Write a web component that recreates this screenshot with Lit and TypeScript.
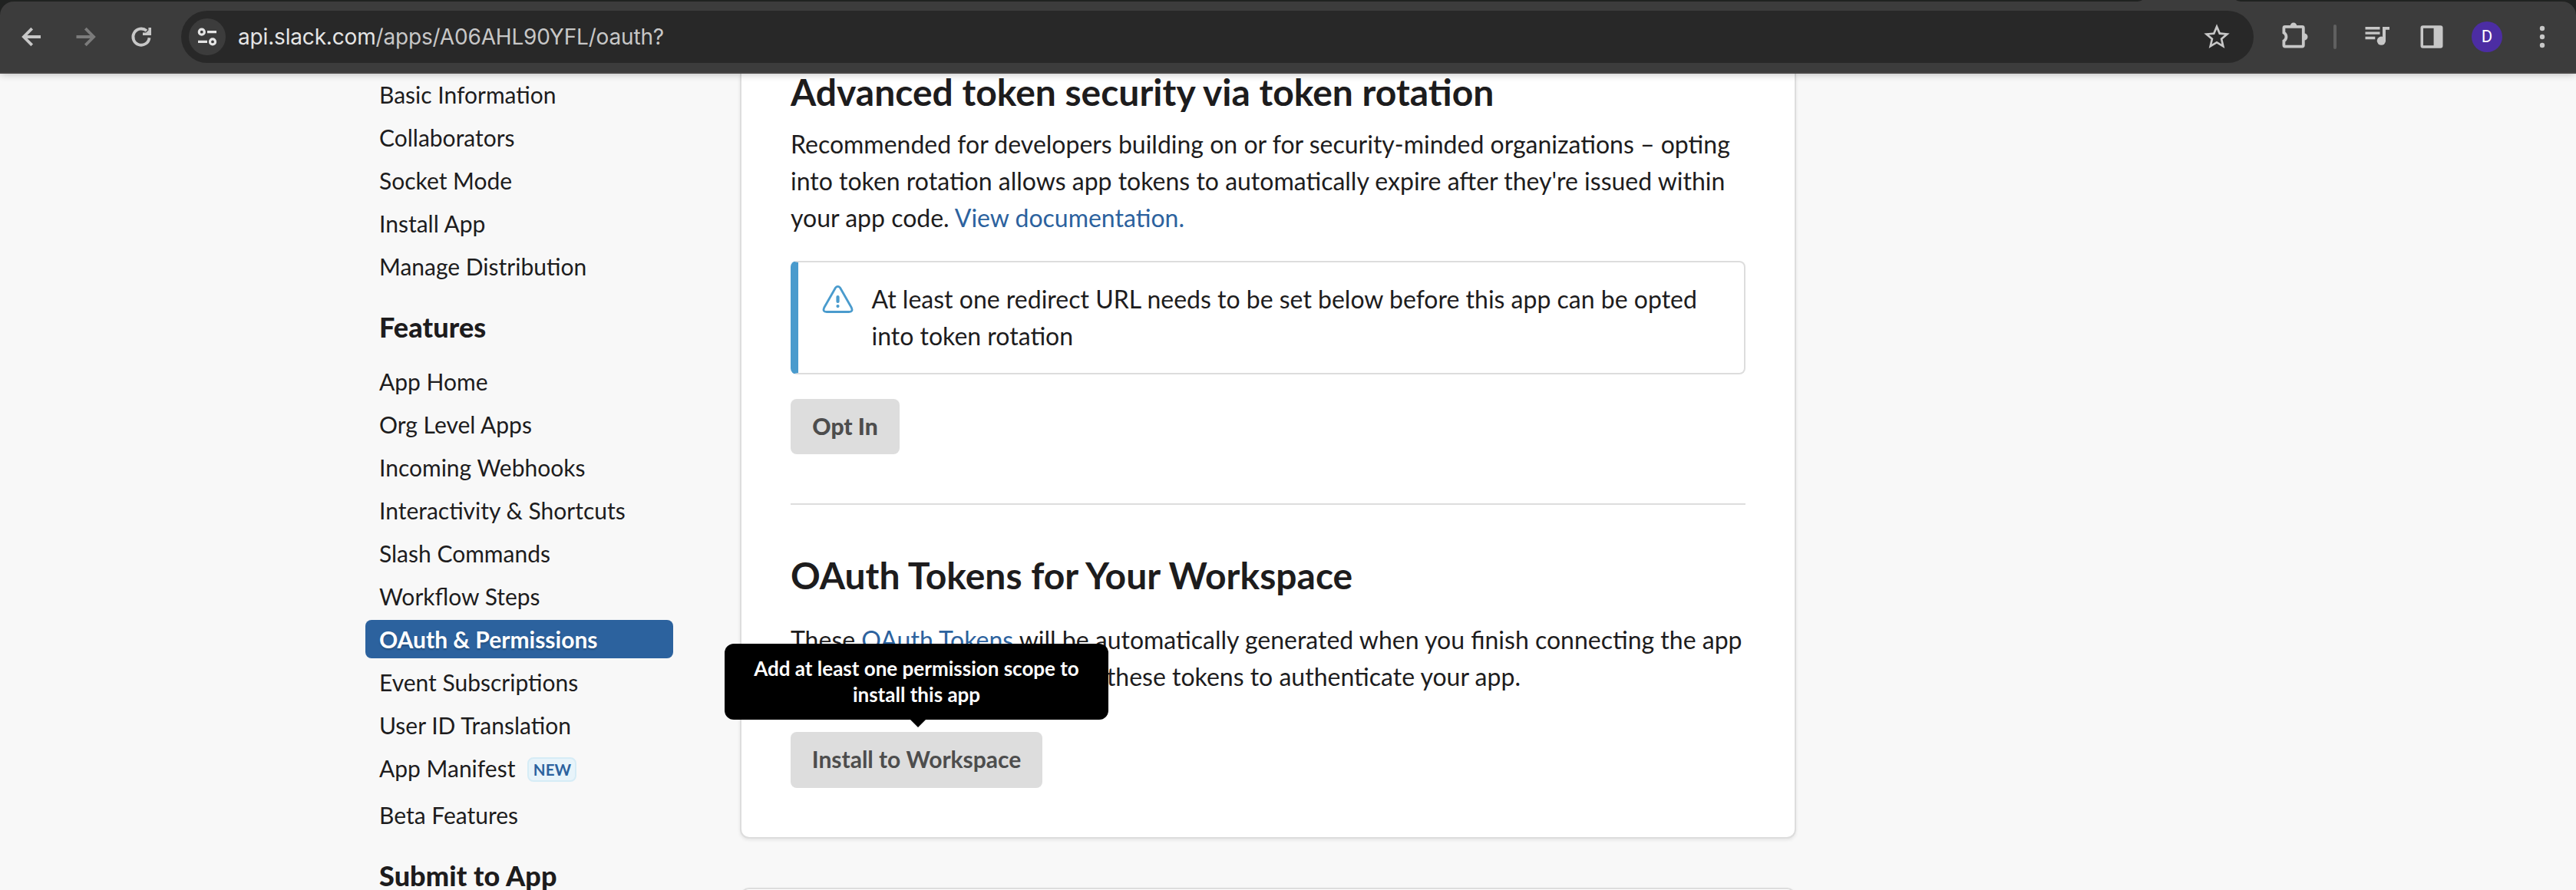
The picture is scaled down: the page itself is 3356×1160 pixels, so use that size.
import { LitElement, html, css, svg, nothing } from "lit";
import { customElement } from "lit/decorators.js";
import { classMap } from "lit/directives/class-map.js";

interface NavItem {
  label: string;
  active?: boolean;
  badge?: string;
}

interface NavSection {
  title?: string;
  items: NavItem[];
}

const SECTIONS: NavSection[] = [
  {
    items: [
      { label: "Basic Information" },
      { label: "Collaborators" },
      { label: "Socket Mode" },
      { label: "Install App" },
      { label: "Manage Distribution" },
    ],
  },
  {
    title: "Features",
    items: [
      { label: "App Home" },
      { label: "Org Level Apps" },
      { label: "Incoming Webhooks" },
      { label: "Interactivity & Shortcuts" },
      { label: "Slash Commands" },
      { label: "Workflow Steps" },
      { label: "OAuth & Permissions", active: true },
      { label: "Event Subscriptions" },
      { label: "User ID Translation" },
      { label: "App Manifest", badge: "NEW" },
      { label: "Beta Features" },
    ],
  },
  { title: "Submit to App", items: [] },
];

@customElement("browser-toolbar")
export class BrowserToolbar extends LitElement {
  static styles = css`
    :host {
      display: block;
      height: 96px;
      background: #202221;
      position: relative;
      z-index: 2;
      box-shadow: 0 0 10px rgba(0, 0, 0, 0.28);
    }
    .tab-foot {
      position: absolute;
      left: 2782px;
      top: 0;
      width: 140px;
      height: 2px;
      display: block;
    }
    .bar {
      box-sizing: border-box;
      height: 96px;
      padding: 14px 22px 0 22px;
      display: flex;
      align-items: flex-start;
      background: #3c3c3c;
      border-bottom: 2px solid #474545;
      clip-path: inset(2px 0 0 0 round 18px 18px 0 0);
    }
    .nav {
      display: flex;
      flex: none;
      gap: 36px;
      padding-top: 16px;
      margin-right: 34px;
    }
    svg {
      display: block;
      flex: none;
    }
    .address {
      box-sizing: border-box;
      flex: none;
      width: 2700px;
      height: 68px;
      border-radius: 34px;
      background: #282828;
      display: flex;
      align-items: center;
      padding: 0 28px 0 10px;
    }
    .site {
      width: 48px;
      height: 48px;
      border-radius: 50%;
      background: #3c3c3c;
    }
    .url {
      flex: 1;
      margin-left: 16px;
      font: 400 28px/40px Inter, "Liberation Sans", sans-serif;
      letter-spacing: -0.17px;
      color: #c7c7c7;
      white-space: nowrap;
    }
    .host {
      color: #e5e5e5;
    }
    .actions {
      display: flex;
      flex: none;
      align-items: center;
      gap: 32px;
      height: 68px;
      margin-left: 32px;
    }
    .divider {
      width: 4px;
      height: 32px;
      border-radius: 2px;
      background: #606060;
    }
    .avatar {
      width: 40px;
      height: 40px;
      border-radius: 50%;
      background: #4c2da3;
      color: #fff;
      font: 400 22px/40px Roboto, sans-serif;
      text-align: center;
    }
  `;

  render() {
    return html`
      <div class="bar">
        <div class="nav">
          <svg width="36" height="36" fill="none" stroke="#c7c7c7" stroke-width="3.8">
            <path d="M19.7 7.2L8.9 18l10.8 10.8M9 18h22" />
          </svg>
          <svg width="36" height="36" fill="none" stroke="#7b7b7b" stroke-width="3.8">
            <path d="M17.3 7.2L28.1 18L17.3 28.8M28 18H5.5" />
          </svg>
          <svg width="36" height="36" fill="none" stroke="#c7c7c7" stroke-width="3.8">
            <path d="M28.5 19.2A10.6 10.6 0 1 1 25 10.2" />
            <path d="M31 6v10H20v-3.4h4.2l3.2-3.2V6z" fill="#c7c7c7" stroke="none" />
          </svg>
        </div>
        <div class="address">
          <div class="site">
            <svg width="48" height="48" fill="none" stroke="#e5e5e5" stroke-width="3.2">
              <circle cx="16.8" cy="17.7" r="3.5" />
              <path d="M24 17.7h12M12 30.4h12" />
              <circle cx="31" cy="30.4" r="3.5" />
            </svg>
          </div>
          <div class="url"><span class="host">api.slack.com</span>/apps/A06AHL90YFL/oauth?</div>
          <svg width="40" height="40" viewBox="0 0 24 24" fill="#c7c7c7">
            <path
              d="M22 9.24l-7.19-.62L12 2 9.19 8.63 2 9.24l5.46 4.73L5.82 21 12 17.27 18.18 21l-1.63-7.03L22 9.24zM12 15.4l-3.76 2.27 1-4.28-3.32-2.88 4.38-.38L12 6.1l1.71 4.04 4.38.38-3.32 2.88 1 4.28L12 15.4z"
            />
          </svg>
        </div>
        <div class="actions">
          <svg width="40" height="40" fill="none" stroke="#c7c7c7" stroke-width="3.8">
            <path
              d="M7.4 14.6V8.4a1.5 1.5 0 0 1 1.5-1.5H31.3a1.5 1.5 0 0 1 1.5 1.5V31.1a1.5 1.5 0 0 1-1.5 1.5H8.9a1.5 1.5 0 0 1-1.5-1.5V25.400a6.300 6.300 0 0 0 0-10.800z"
              stroke="none"
            />
            <path
              d="M7.4 14.600V8.400a1.500 1.500 0 0 1 1.500-1.500H31.300a1.500 1.500 0 0 1 1.500 1.500V31.100a1.500 1.500 0 0 1-1.500 1.500H8.900a1.500 1.500 0 0 1-1.500-1.500V25.400a6.300 6.300 0 0 0 0-10.800z"
            />
            <path d="M15.700 5.800a4.300 4.300 0 0 1 8.600 0zM34 15.500a4.500 4.500 0 0 1 0 9z" fill="#c7c7c7" stroke="none" />
          </svg>
          <div class="divider"></div>
          <svg width="40" height="40" fill="#c7c7c7">
            <path d="M5.5 7h19v3.4h-19zM5.5 13.4h19v3.4h-19zM5.5 19.8h12.8v3.4H5.5z" />
            <path d="M28 7h9v3.8h-5v14.5h-4z" />
            <circle cx="26.4" cy="25.2" r="5.6" />
          </svg>
          <svg width="40" height="40" fill="#c7c7c7">
            <path
              fill-rule="evenodd"
              d="M8.5 5.2h23a3 3 0 0 1 3 3v23.6a3 3 0 0 1-3 3h-23a3 3 0 0 1-3-3V8.2a3 3 0 0 1 3-3zM9 8.8v22.4h13.6V8.8z"
            />
          </svg>
          <div class="avatar">D</div>
          <svg width="40" height="40" fill="#c7c7c7">
            <circle cx="20" cy="9" r="3.2" />
            <circle cx="20" cy="20" r="3.2" />
            <circle cx="20" cy="31" r="3.2" />
          </svg>
        </div>
      </div>
      <svg class="tab-foot" viewBox="0 0 140 2">
        <path d="M0 2Q6 2 9 0H131Q134 2 140 2z" fill="#3c3c3c" />
      </svg>
    `;
  }
}

@customElement("side-nav")
export class SideNav extends LitElement {
  static styles = css`
    :host {
      display: block;
      width: 401px;
      padding-top: 2px;
    }
    .list {
      display: flex;
      flex-direction: column;
      gap: 6px;
    }
    .item {
      display: flex;
      align-items: flex-start;
      height: 50px;
      padding: 0 18px;
      border-radius: 8px;
      font-size: 30px;
      line-height: 50px;
      white-space: nowrap;
    }
    .item.tall {
      height: 55px;
    }
    .item.active {
      background: #2c629e;
      color: #fff;
      font-weight: 700;
      text-shadow: 0 2px 2px rgba(0, 0, 0, 0.2);
    }
    .title {
      margin: 32px 0 24px;
      padding-left: 18px;
      font-size: 36px;
      line-height: 44px;
      font-weight: 900;
      letter-spacing: 0.1px;
    }
    .badge {
      box-sizing: border-box;
      width: 64px;
      height: 32px;
      margin: 11px 0 0 16px;
      border: 2px solid #d6ecf6;
      border-radius: 8px;
      background: #e8f4fa;
      color: #2c629e;
      font-size: 20.5px;
      line-height: 28px;
      font-weight: 700;
      text-align: center;
    }
  `;

  private renderItem(item: NavItem) {
    const classes = { item: true, active: !!item.active, tall: !!item.badge };
    return html`<div class=${classMap(classes)}>
      <span>${item.label}</span>${item.badge ? html`<span class="badge">${item.badge}</span>` : nothing}
    </div>`;
  }

  render() {
    return SECTIONS.map(
      (s) => html`
        ${s.title ? html`<div class="title">${s.title}</div>` : nothing}
        <div class="list">${s.items.map((i) => this.renderItem(i))}</div>
      `,
    );
  }
}

@customElement("oauth-panel")
export class OauthPanel extends LitElement {
  static styles = css`
    :host {
      display: block;
      width: 1376px;
    }
    .card {
      box-sizing: border-box;
      padding: 0 64px 64px;
      background: #fff;
      border: 2px solid #dddddd;
      border-top: 0;
      border-radius: 0 0 12px 12px;
      box-shadow: 0 2px 4px rgba(0, 0, 0, 0.08);
    }
    .card.next {
      margin-top: 64px;
      height: 80px;
      border-top: 2px solid #dddddd;
      border-radius: 12px;
    }
    h2 {
      margin: 0;
      font-size: 48px;
      font-weight: 700;
      white-space: nowrap;
    }
    .h-first {
      line-height: 47px;
    }
    .h-second {
      line-height: 57px;
      margin-top: 63px;
    }
    p {
      margin: 21px 0 0;
      font-size: 32px;
      line-height: 48px;
    }
    .p-second {
      margin-top: 32px;
    }
    .link {
      color: #2c629e;
    }
    .alert {
      display: flex;
      margin-top: 32px;
      padding: 24px 32px 24px 31px;
      border: 2px solid #dddddd;
      border-left: 10px solid #4a9bcd;
      border-radius: 8px;
      font-size: 32px;
      line-height: 48px;
    }
    .alert svg {
      flex: none;
      display: block;
      margin: 5px 23.5px 0 0;
    }
    .btn {
      position: relative;
      display: flex;
      align-items: center;
      justify-content: center;
      box-sizing: border-box;
      width: 142px;
      height: 72px;
      padding-bottom: 2px;
      border-radius: 8px;
      background: #dddddd;
      color: #4d4d4d;
      font-size: 30px;
      font-weight: 900;
      white-space: nowrap;
    }
    .row {
      display: flex;
      margin-top: 32px;
    }
    .row.install {
      margin-top: 48px;
    }
    .install .btn {
      width: 328px;
      height: 73px;
      padding-bottom: 3px;
      font-weight: 700;
    }
    .rule {
      height: 2px;
      margin-top: 64px;
      background: #dddddd;
    }
    .tip {
      position: absolute;
      left: 50%;
      bottom: 89px;
      transform: translateX(-50%);
      box-sizing: border-box;
      width: 500px;
      height: 99px;
      padding: 15px 24px 0;
      border-radius: 12px;
      background: #000;
      color: #fff;
      font-size: 26px;
      line-height: 34px;
      font-weight: 700;
      text-align: center;
      white-space: normal;
    }
    .tip::after {
      content: "";
      position: absolute;
      left: 242px;
      top: 99px;
      border: 10px solid transparent;
      border-top-color: #000;
      border-bottom: 0;
    }
  `;

  render() {
    return html`
      <div class="card">
        <h2 class="h-first">Advanced token security via token rotation</h2>
        <p>
          Recommended for developers building on or for security-minded organizations – opting into token rotation
          allows app tokens to automatically expire after they're issued within your app code.
          <span class="link">View documentation.</span>
        </p>
        <div class="alert">
          <svg width="41" height="40" fill="none" stroke="#4a9bcd" stroke-width="2.8" stroke-linejoin="round" stroke-linecap="round">
            ${svg`<path d="M17.4 4.2L2.8 29.8Q.2 35.5 6 35.5H35Q40.8 35.5 38.2 29.8L23.6 4.2Q20.5 .6 17.4 4.2z" />
            <path d="M20.5 16v6" stroke-width="4.2" /><path d="M20.5 28v.1" stroke-width="4.2" />`}
          </svg>
          <div>At least one redirect URL needs to be set below before this app can be opted into token rotation</div>
        </div>
        <div class="row"><div class="btn">Opt In</div></div>
        <div class="rule"></div>
        <h2 class="h-second">OAuth Tokens for Your Workspace</h2>
        <p class="p-second">
          These <span class="link">OAuth Tokens</span> will be automatically generated when you finish connecting the
          app to your workspace. You’ll use these tokens to authenticate your app.
        </p>
        <div class="row install">
          <div class="btn">
            Install to Workspace
            <div class="tip">Add at least one permission scope to install this app</div>
          </div>
        </div>
      </div>
      <div class="card next"></div>
    `;
  }
}

@customElement("app-root")
export class AppRoot extends LitElement {
  static styles = css`
    :host {
      display: block;
      height: 1160px;
      overflow: hidden;
      background: #f8f8f8;
      color: #1d1c1d;
      font-family: Lato, "Liberation Sans", sans-serif;
    }
    .page {
      display: flex;
      gap: 87px;
      padding-left: 476px;
    }
  `;

  render() {
    return html`
      <browser-toolbar></browser-toolbar>
      <div class="page">
        <side-nav></side-nav>
        <oauth-panel></oauth-panel>
      </div>
    `;
  }
}
